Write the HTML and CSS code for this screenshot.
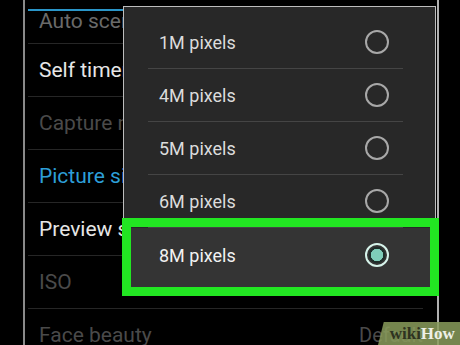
FILE: index.html
```html
<!DOCTYPE html>
<html>
<head>
<meta charset="utf-8">
<link rel="stylesheet" href="styles.css">
</head>
<body>
<div class="page">
  <div class="screen">
    <div class="list">
      <div class="row dim">Auto scene detection</div>
      <div class="row">Self timer</div>
      <div class="row off">Capture mode</div>
      <div class="row active">Picture size</div>
      <div class="row">Preview size</div>
      <div class="row off">ISO</div>
      <div class="row off last"><span>Face beauty</span><span class="val">Default</span></div>
    </div>
  </div>
  <div class="scrollbar"></div>
  <div class="dialog">
    <div class="opt"><span>1M pixels</span><span class="radio"></span></div>
    <div class="opt"><span>4M pixels</span><span class="radio"></span></div>
    <div class="opt"><span>5M pixels</span><span class="radio"></span></div>
    <div class="opt"><span>6M pixels</span><span class="radio"></span></div>
    <div class="opt sel"><span>8M pixels</span><span class="radio on"></span></div>
  </div>
  <div class="highlight"></div>
  <div class="wm"><span class="wiki">wiki</span><span class="how">How</span></div>
</div>
</body>
</html>
```
FILE: styles.css
```css
html, body {
  margin: 0;
  padding: 0;
  background: #000;
}
.page {
  position: relative;
  width: 460px;
  height: 345px;
  overflow: hidden;
  font-family: Roboto, "Liberation Sans", sans-serif;
}
.screen {
  margin-left: 23px;
  width: 412px;
  height: 345px;
  border-left: 2px solid #8a8a8a;
  border-right: 2px solid #b0b0b0;
  overflow: hidden;
}
.list {
  margin-top: -9px;
}
.row {
  box-sizing: border-box;
  height: 53px;
  margin: 0 14px 0 3px;
  padding-left: 11px;
  border-bottom: 1px solid #262626;
  display: flex;
  align-items: center;
  justify-content: space-between;
  font-size: 21px;
  color: #e6e6e6;
  white-space: nowrap;
}
.row.dim { color: #6a6a6a; padding-top: 8px; }
.row.off { color: #4a4a4a; }
.row.active { color: #2d9fd8; }
.row .val { color: #4a4a4a; font-size: 20px; margin-right: 0; }
.scrollbar {
  position: absolute;
  left: 28px;
  top: 9px;
  width: 100px;
  height: 2px;
  background: #2a95c8;
}
.dialog {
  position: absolute;
  left: 123px;
  top: 6px;
  width: 313px;
  height: 288px;
  box-sizing: border-box;
  background: #282828;
  border: 1px solid #bdbdbd;
  border-bottom: none;
  padding-top: 9px;
}
.opt {
  box-sizing: border-box;
  height: 53px;
  margin: 0 32px 0 24px;
  padding: 0 14px 0 11px;
  border-bottom: 1px solid #454545;
  display: flex;
  align-items: center;
  justify-content: space-between;
  font-size: 18px;
  color: #dcdcdc;
}
.opt.sel {
  border-bottom: none;
  margin: 0;
  padding: 0 46px 6px 35px;
  height: 60px;
  background: #343434;
  color: #f2f2f2;
}
.radio {
  box-sizing: border-box;
  width: 24px;
  height: 24px;
  border: 2px solid #a8a8a8;
  border-radius: 50%;
}
.radio.on {
  border: 2px solid #d6f3ea;
  background: radial-gradient(circle, #7fcdb9 0 6px, #1e2e2a 6.5px 8px, transparent 8.5px);
}
.highlight {
  position: absolute;
  left: 122px;
  top: 218px;
  width: 317px;
  height: 78px;
  box-sizing: border-box;
  border: 9px solid #22e622;
}
.wm {
  position: absolute;
  right: -12px;
  bottom: 0;
  width: 94px;
  height: 23px;
  background: rgba(138, 156, 92, 0.85);
  transform: skewX(-14deg);
  transform-origin: bottom left;
  display: flex;
  align-items: center;
  padding-left: 9px;
  box-sizing: border-box;
  font-family: "Liberation Serif", serif;
  font-weight: bold;
  font-size: 17px;
}
.wm span { transform: skewX(14deg); display: inline-block; }
.wiki { color: #2e3320; }
.how { color: #eef0e6; }
```
